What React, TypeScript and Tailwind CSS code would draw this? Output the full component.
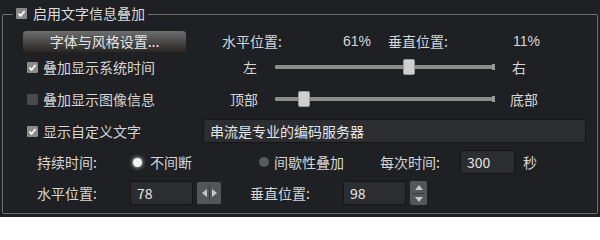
import React from 'react';

const font = { fontFamily: '"Noto Sans CJK SC", "Liberation Sans", sans-serif' };

function Check({ checked }: { checked: boolean }) {
  return (
    <div
      className={`flex h-[11px] w-[11px] shrink-0 items-center justify-center rounded-[1px] ${
        checked ? 'bg-[#8a8a8a]' : 'bg-[#4a4a4c]'
      }`}
    >
      {checked && (
        <svg width="9" height="9" viewBox="0 0 9 9">
          <path d="M1.5 4.6 L3.6 6.8 L7.6 2" stroke="#fff" strokeWidth="1.8" fill="none" />
        </svg>
      )}
    </div>
  );
}

function Slider({ pos }: { pos: number }) {
  return (
    <div className="relative h-[16px] w-[220px]">
      <div className="absolute left-0 right-0 top-[6px] h-[4px] rounded-[1px] bg-[#8c8c8c]" />
      <div className="absolute right-0 top-[5px] h-[6px] w-[3px] bg-[#9a9a9a]" />
      <div
        className="absolute top-0 h-[16px] w-[12px] rounded-[2px] border border-[#9a9a9a] bg-[#cfcfd1]"
        style={{ left: pos }}
      />
    </div>
  );
}

function Field({ value, w }: { value: string; w: string }) {
  return (
    <div
      className={`flex h-[24px] ${w} items-center rounded-[2px] border border-[#151515] bg-[#2c2d30] pl-[6px] text-[14px] text-[#e6e6e6]`}
    >
      {value}
    </div>
  );
}

export default function App() {
  return (
    <div className="h-[217px] w-[600px] overflow-hidden bg-[#1f2023] text-[14px] leading-none text-[#d6d6d6]" style={font}>
      <div className="h-[14px]" />
      <div className="relative ml-[2px] h-[200px] w-[596px] rounded-[2px] border border-[#6e6e6e]">
        {/* legend */}
        <div className="absolute left-[10px] top-[-9px] flex items-center gap-[6px] bg-[#1f2023] px-[3px]">
          <Check checked />
          <span className="text-[14px] text-[#dcdcdc]">启用文字信息叠加</span>
        </div>

        <div className="pt-[13px]">
          {/* row 1 */}
          <div className="flex h-[26px] items-center">
            <button className="ml-[19px] h-[23px] w-[165px] rounded-[4px] border border-[#222] bg-gradient-to-b from-[#6e6e6e] via-[#4a4a4a] to-[#2a2624] text-[14px] text-[#e4e4e4]">
              字体与风格设置...
            </button>
            <span className="ml-[35px] w-[121px]">水平位置:</span>
            <span className="w-[45px]" style={{ fontFamily: '"Liberation Sans", sans-serif', fontSize: 14 }}>61%</span>
            <span className="w-[125px]">垂直位置:</span>
            <span style={{ fontFamily: '"Liberation Sans", sans-serif', fontSize: 14 }}>11%</span>
          </div>

          {/* row 2 */}
          <div className="flex h-[26px] items-center">
            <div className="ml-[24px] flex w-[216px] items-center gap-[5px]">
              <Check checked />
              <span>叠加显示系统时间</span>
            </div>
            <span className="w-[32px]">左</span>
            <Slider pos={128} />
            <span className="ml-[17px]">右</span>
          </div>

          {/* row 3 */}
          <div className="mt-[6px] flex h-[26px] items-center">
            <div className="ml-[24px] flex w-[203px] items-center gap-[5px]">
              <Check checked={false} />
              <span>叠加显示图像信息</span>
            </div>
            <span className="w-[45px]">顶部</span>
            <Slider pos={23} />
            <span className="ml-[15px]">底部</span>
          </div>

          {/* row 4 */}
          <div className="mt-[6px] flex h-[26px] items-center">
            <div className="ml-[24px] flex w-[176px] items-center gap-[5px]">
              <Check checked />
              <span>显示自定义文字</span>
            </div>
            <Field value="串流是专业的编码服务器" w="w-[383px]" />
          </div>

          {/* row 5 */}
          <div className="mt-[5px] flex h-[26px] items-center">
            <span className="ml-[34px] w-[96px]">持续时间:</span>
            <div className="h-[9px] w-[9px] rounded-full bg-[#f4f4f4] shadow-[0_0_4px_#fff]" />
            <span className="ml-[8px] w-[109px]">不间断</span>
            <div className="h-[10px] w-[10px] rounded-full bg-[#5a5a5c]" />
            <span className="ml-[5px] w-[106px]">间歇性叠加</span>
            <span className="w-[80px]">每次时间:</span>
            <Field value="300" w="w-[55px]" />
            <span className="ml-[8px]">秒</span>
          </div>

          {/* row 6 */}
          <div className="mt-[5px] flex h-[26px] items-center">
            <span className="ml-[34px] w-[93px]">水平位置:</span>
            <Field value="78" w="w-[63px]" />
            <div className="ml-[4px] flex h-[22px] w-[24px] items-center justify-center gap-[2px] rounded-[2px] bg-[#555659]">
              <svg width="5" height="8" viewBox="0 0 5 8"><path d="M5 0 L0 4 L5 8 Z" fill="#c8c8c8" /></svg>
              <div className="h-[16px] w-px bg-[#3a3a3a]" />
              <svg width="5" height="8" viewBox="0 0 5 8"><path d="M0 0 L5 4 L0 8 Z" fill="#c8c8c8" /></svg>
            </div>
            <span className="ml-[29px] w-[93px]">垂直位置:</span>
            <Field value="98" w="w-[63px]" />
            <div className="ml-[4px] flex h-[24px] w-[17px] flex-col items-center justify-center gap-[3px] rounded-[2px] bg-[#555659]">
              <svg width="8" height="5" viewBox="0 0 8 5"><path d="M0 5 L4 0 L8 5 Z" fill="#c8c8c8" /></svg>
              <div className="h-px w-[13px] bg-[#3a3a3a]" />
              <svg width="8" height="5" viewBox="0 0 8 5"><path d="M0 0 L4 5 L8 0 Z" fill="#c8c8c8" /></svg>
            </div>
          </div>
        </div>
      </div>
    </div>
  );
}
